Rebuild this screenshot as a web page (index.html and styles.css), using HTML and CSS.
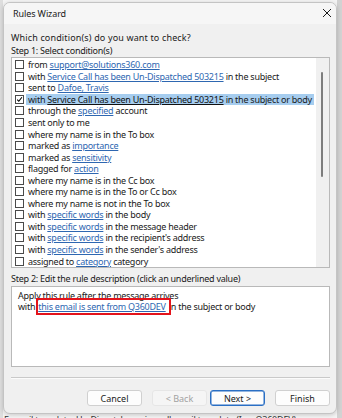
FILE: index.html
```html
<!DOCTYPE html>
<html lang="en">

<head>
    <meta charset="UTF-8">
    <meta name="viewport" content="width=device-width, initial-scale=1.0">
    <title>Rules Wizard</title>
    <link rel="stylesheet" href="styles.css">
</head>

<body>
    <div class="desk">
        <div class="dialog">
            <div class="titlebar">
                <span class="title">Rules Wizard</span>
                <svg class="close" width="10" height="10" viewBox="0 0 10 10">
                    <path d="M1 1 L9 9 M9 1 L1 9" stroke="#1b1b1b" stroke-width="1" fill="none" />
                </svg>
            </div>

            <div class="content">
                <p class="line question">Which condition(s) do you want to check?</p>
                <p class="line step">Step 1: Select condition(s)</p>

                <div class="listbox">
                    <ul class="conds">
                        <li><span class="cb"></span><span class="txt">from <a>support@solutions360.com</a></span></li>
                        <li><span class="cb"></span><span class="txt">with <a>Service Call has been Un-Dispatched 503215</a> in the subject</span></li>
                        <li><span class="cb"></span><span class="txt">sent to <a>Dafoe, Travis</a></span></li>
                        <li class="selected"><span class="cb checked">
                                <svg width="9" height="9" viewBox="0 0 9 9">
                                    <path d="M1.5 4.6 L3.6 6.8 L7.6 1.6" stroke="#000" stroke-width="1.4" fill="none" />
                                </svg>
                            </span><span class="txt">with <a>Service Call has been Un-Dispatched 503215</a> in the subject or body</span></li>
                        <li><span class="cb"></span><span class="txt">through the <a>specified</a> account</span></li>
                        <li><span class="cb"></span><span class="txt">sent only to me</span></li>
                        <li><span class="cb"></span><span class="txt">where my name is in the To box</span></li>
                        <li><span class="cb"></span><span class="txt">marked as <a>importance</a></span></li>
                        <li><span class="cb"></span><span class="txt">marked as <a>sensitivity</a></span></li>
                        <li><span class="cb"></span><span class="txt">flagged for <a>action</a></span></li>
                        <li><span class="cb"></span><span class="txt">where my name is in the Cc box</span></li>
                        <li><span class="cb"></span><span class="txt">where my name is in the To or Cc box</span></li>
                        <li><span class="cb"></span><span class="txt">where my name is not in the To box</span></li>
                        <li><span class="cb"></span><span class="txt">with <a>specific words</a> in the body</span></li>
                        <li><span class="cb"></span><span class="txt">with <a>specific words</a> in the message header</span></li>
                        <li><span class="cb"></span><span class="txt">with <a>specific words</a> in the recipient's address</span></li>
                        <li><span class="cb"></span><span class="txt">with <a>specific words</a> in the sender's address</span></li>
                        <li><span class="cb"></span><span class="txt">assigned to <a>category</a> category</span></li>
                    </ul>
                    <div class="scroll">
                        <div class="thumb"></div>
                    </div>
                </div>

                <p class="line step2">Step 2: Edit the rule description (click an underlined value)</p>

                <div class="desc">
                    <div class="desc-line">Apply this rule after the message arrives</div>
                    <div class="desc-line">with <span class="marked"><a>this email is sent from Q360DEV</a></span> in the subject or body</div>
                </div>

                <div class="sep"></div>

                <div class="buttons">
                    <button class="btn">Cancel</button>
                    <button class="btn disabled">&lt; Back</button>
                    <button class="btn default">Next &gt;</button>
                    <button class="btn">Finish</button>
                </div>
            </div>
        </div>
        <div class="behind">E email template: Un-Dispatch service call email template  (Inc. Q360DEV)</div>
    </div>
</body>

</html>
```

FILE: styles.css
```css
body {
    margin: 0;
    background-color: #ececec;
    font-family: "Noto Sans", "Open Sans", sans-serif;
    font-size: 9px;
    color: #1a1a1a;
    overflow: hidden;
}

.desk {
    width: 342px;
    height: 418px;
    background: linear-gradient(90deg, #dedede 0, #dedede 3px, #f4f4f4 3px, #f4f4f4 337px, #d2d2d2 337px);
    position: relative;
    overflow: hidden;
}

.dialog {
    box-sizing: border-box;
    margin: 2px 0 0 3px;
    width: 334px;
    height: 412px;
    background-color: #f0f0f0;
    border: 1px solid #c4c4c4;
    border-radius: 7px;
    box-shadow: 0 1px 4px rgba(0, 0, 0, 0.18);
    overflow: hidden;
    display: flex;
    flex-direction: column;
}

.titlebar {
    height: 21px;
    flex: none;
    display: flex;
    align-items: center;
    justify-content: space-between;
    padding: 0 4px 0 9px;
    background-color: #f6f6f6;
}

.title {
    font-size: 9px;
    letter-spacing: -0.1px;
}

.close {
    margin-top: -1px;
}

.content {
    padding: 0 6px 0 7px;
    display: flex;
    flex-direction: column;
}

.line {
    margin: 0;
    height: 13px;
    line-height: 13px;
    letter-spacing: -0.25px;
}

.question {
    margin-top: 7px;
    letter-spacing: 0.15px;
}

.listbox {
    margin-top: 0;
    height: 211px;
    box-sizing: border-box;
    border: 1px solid #b9b9b9;
    background-color: #fff;
    display: flex;
}

.conds {
    list-style: none;
    margin: 0;
    padding: 1px 0 0 3px;
    flex: 1;
    overflow: hidden;
}

.conds li {
    height: 11.55px;
    display: flex;
    align-items: center;
    white-space: nowrap;
    letter-spacing: -0.25px;
}

.cb {
    box-sizing: border-box;
    width: 9px;
    height: 9px;
    border: 1px solid #4a4a4a;
    background-color: #fff;
    margin-right: 2px;
    flex: none;
    display: flex;
    align-items: center;
    justify-content: center;
}

.cb svg {
    display: block;
}

.txt {
    padding: 0 2px;
    line-height: 11px;
}

.conds a,
.desc a {
    color: #2e67b1;
    text-decoration: underline;
    text-underline-offset: 1px;
}

.selected .txt {
    background-color: #a6cdef;
}

.selected a {
    color: #111;
}

.scroll {
    width: 13px;
    flex: none;
    background-color: #f0f0f0;
}

.thumb {
    margin: 14px 0 0 5px;
    width: 2px;
    height: 105px;
    background-color: #7d7d7d;
    border-radius: 1px;
}

.step2 {
    margin-top: 4px;
}

.desc {
    margin-top: 1px;
    height: 81px;
    box-sizing: border-box;
    border: 1px solid #b9b9b9;
    background-color: #fff;
    padding: 3px 0 0 6px;
    letter-spacing: -0.25px;
}

.desc-line {
    height: 11px;
    line-height: 11px;
    white-space: nowrap;
}

.marked {
    position: relative;
    padding: 0 1px;
}

.marked::after {
    content: "";
    position: absolute;
    left: -1px;
    right: -4px;
    top: -2px;
    bottom: -2px;
    border: 2px solid #e3131b;
}

.sep {
    margin: 10px 0 0 0;
    height: 1px;
    background-color: #c9c9c9;
    border-bottom: 1px solid #fbfbfb;
}

.buttons {
    margin-top: 11px;
    display: flex;
    justify-content: flex-end;
    gap: 10px;
}

.btn {
    box-sizing: border-box;
    width: 55px;
    height: 16px;
    padding: 0;
    font-family: inherit;
    font-size: 9px;
    color: #1a1a1a;
    background-color: #fdfdfd;
    border: 1px solid #d0d0d0;
    border-radius: 3px;
}

.btn.disabled {
    color: #a2a2a2;
    background-color: #f5f5f5;
    border-color: #e6e6e6;
    margin-right: -7px;
}

.btn.default {
    border: 1px solid #2a6fc4;
    box-shadow: inset 0 0 0 0.5px #2a6fc4;
}

.behind {
    position: absolute;
    left: 4px;
    top: 413px;
    font-size: 9px;
    color: #333;
    white-space: nowrap;
    letter-spacing: -0.2px;
}
```
